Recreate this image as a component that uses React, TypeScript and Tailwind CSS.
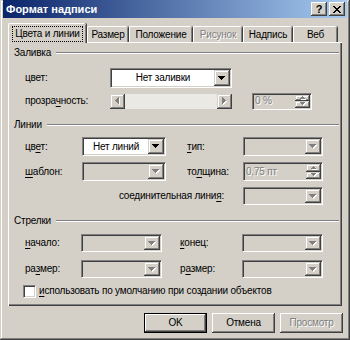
import React from "react";

const raised =
  "bg-[#d4d0c8] shadow-[inset_-1px_-1px_#404040,inset_1px_1px_#fff,inset_-2px_-2px_#808080,inset_2px_2px_#d4d0c8]";
const raisedCombo =
  "bg-[#d4d0c8] shadow-[inset_-1px_-1px_#404040,inset_1px_1px_#d4d0c8,inset_-2px_-2px_#808080,inset_2px_2px_#fff]";
const dis = "text-[#808080] [text-shadow:1px_1px_0_#fff]";

function DownArrow({ disabled }: { disabled?: boolean }) {
  return (
    <svg width="8" height="5" viewBox="0 0 8 5" shapeRendering="crispEdges">
      {disabled && <path d="M1 1h7v1h-1v1h-1v1h-1v1h-1v-1h-1v-1h-1v-1h-1z" fill="#fff" />}
      <path d="M0 0h7v1h-1v1h-1v1h-1v1h-1v-1h-1v-1h-1v-1h-1z" fill={disabled ? "#808080" : "#000"} />
    </svg>
  );
}

function SmallArrow({ up, disabled }: { up?: boolean; disabled?: boolean }) {
  const c = disabled ? "#808080" : "#000";
  return (
    <svg width="6" height="4" viewBox="0 0 6 4" shapeRendering="crispEdges">
      {disabled && (
        <path d={up ? "M3 1h1v1h1v1h1v1h-5v-1h1v-1h1z" : "M1 1h5v1h-1v1h-1v1h-1v-1h-1v-1h-1z"} fill="#fff" />
      )}
      <path d={up ? "M2 0h1v1h1v1h1v1h-5v-1h1v-1h1z" : "M0 0h5v1h-1v1h-1v1h-1v-1h-1v-1h-1z"} fill={c} />
    </svg>
  );
}

function SideArrow({ left }: { left?: boolean }) {
  return (
    <svg width="5" height="8" viewBox="0 0 5 8" shapeRendering="crispEdges">
      <path d={left ? "M4 1h1v7h-1v-1h-1v-1h-1v-1h-1v-1h1v-1h1v-1h1z" : "M1 1h1v1h1v1h1v1h1v1h-1v1h-1v1h-1v1h-1z"} fill="#fff" />
      <path d={left ? "M3 0h1v7h-1v-1h-1v-1h-1v-1h-1v-1h1v-1h1v-1h1z" : "M0 0h1v1h1v1h1v1h1v1h-1v1h-1v1h-1v1h-1z"} fill="#808080" />
    </svg>
  );
}

function Sunken({
  className,
  disabled,
  children,
}: {
  className: string;
  disabled?: boolean;
  children?: React.ReactNode;
}) {
  return (
    <div
      className={`box-border flex items-stretch border border-t-[#808080] border-l-[#808080] border-r-white border-b-white p-[1px] shadow-[inset_1px_1px_#404040,inset_-1px_-1px_#d4d0c8] ${
        disabled ? "bg-[#d4d0c8]" : "bg-white"
      } ${className}`}
    >
      {children}
    </div>
  );
}

function Combo({ className, text, disabled, center }: { className: string; text?: string; disabled?: boolean; center?: boolean }) {
  return (
    <Sunken className={className} disabled={disabled}>
      <div className={`flex flex-1 items-center whitespace-nowrap ${center ? "justify-center" : "pl-[3px]"} text-black`}>{text}</div>
      <div className={`flex w-[16px] items-center justify-center ${raisedCombo}`}>
        <DownArrow disabled={disabled} />
      </div>
    </Sunken>
  );
}

function Spin({ className, text }: { className: string; text: string }) {
  return (
    <Sunken className={className} disabled>
      <div className={`flex flex-1 items-center whitespace-nowrap pl-[1px] ${dis}`}>{text}</div>
      <div className="flex w-[15px] flex-col">
        <div className={`flex flex-1 items-center justify-center ${raisedCombo}`}>
          <SmallArrow up disabled />
        </div>
        <div className={`flex flex-1 items-center justify-center ${raisedCombo}`}>
          <SmallArrow disabled />
        </div>
      </div>
    </Sunken>
  );
}

function Group({ label }: { label: string }) {
  return (
    <div className="mr-[3px] flex h-[14px] items-center pl-[5px]">
      <span>{label}</span>
      <div className="ml-[5px] h-[2px] flex-1 border-t border-b border-t-[#808080] border-b-white" />
    </div>
  );
}

function U({ children }: { children: React.ReactNode }) {
  return <span className="underline underline-offset-[2px]">{children}</span>;
}

const tab =
  "ml-[1px] flex h-[16px] items-center justify-center whitespace-nowrap rounded-t-[2px] border-l border-t border-l-white border-t-white shadow-[inset_-1px_0_#808080,1px_0_#404040]";

export default function App() {
  return (
    <div className="relative h-[340px] w-[350px] overflow-hidden bg-[#d4d0c8] font-['Liberation_Sans',Arial,sans-serif] text-[10px] leading-none tracking-[-0.2px] text-black">
      <div className="box-border flex h-[340px] w-[350px] flex-col px-[3px] shadow-[inset_-1px_-1px_#404040,inset_1px_1px_#d4d0c8,inset_-2px_-2px_#808080,inset_2px_2px_#fff]">
        {/* title bar */}
        <div className="flex h-[18px] items-center bg-[linear-gradient(to_right,#0a246a,#a6caf0)] pl-[3px] pr-[2px]">
          <span className="flex-1 text-[11px] font-bold tracking-normal text-white">Формат надписи</span>
          <div className={`flex h-[14px] w-[16px] items-center justify-center text-[11px] font-bold ${raised}`}>?</div>
          <div className={`ml-[2px] flex h-[14px] w-[16px] items-center justify-center ${raised}`}>
            <svg width="8" height="7" viewBox="0 0 8 7" shapeRendering="crispEdges">
              <path d="M0 0h2v1h1v1h2v-1h1v-1h2v1h-1v1h-1v1h-1v1h1v1h1v1h1v1h-2v-1h-1v-1h-2v1h-1v1h-2v-1h1v-1h1v-1h1v-1h-1v-1h-1v-1h-1z" fill="#000" />
            </svg>
          </div>
        </div>

        {/* tabs */}
        <div className="relative z-10 ml-[5px] mt-[6px] flex h-[18px] items-end">
          <div className="relative -mb-[1px] flex h-[20px] w-[78px] items-center justify-center whitespace-nowrap rounded-t-[2px] border-l border-t border-l-white border-t-white bg-[#d4d0c8] shadow-[inset_-1px_0_#808080,1px_0_#404040]">
            <span className="border border-dotted border-black px-[2px] py-[2px]">Цвета и линии</span>
          </div>
          <div className={`${tab} w-[41px]`}>Размер</div>
          <div className={`${tab} w-[63px]`}>Положение</div>
          <div className={`${tab} w-[49px] ${dis}`}>Рисунок</div>
          <div className={`${tab} w-[49px]`}>Надпись</div>
          <div className={`${tab} w-[44px]`}>Веб</div>
        </div>

        {/* panel */}
        <div className="ml-[5px] box-border flex h-[264px] w-[334px] flex-col border-l border-t border-l-white border-t-white shadow-[inset_-1px_-1px_#404040,inset_-2px_-2px_#808080]">
          <div className="mt-[3px]">
            <Group label="Заливка" />
          </div>
          <div className="mt-[8px] flex h-[20px] items-center pl-[16px]">
            <span className="w-[85px]">цвет:</span>
            <Combo className="h-[20px] w-[122px]" text="Нет заливки" center />
          </div>
          <div className="mt-[5px] flex h-[16px] items-center pl-[16px]">
            <span className="w-[85px]">
              прозра<U>ч</U>ность:
            </span>
            <div className="flex h-[15px] w-[122px]">
              <div className={`flex w-[15px] items-center justify-center ${raisedCombo}`}>
                <SideArrow left />
              </div>
              <div className="flex-1 bg-[#ebe9e4]" />
              <div className={`flex w-[15px] items-center justify-center ${raisedCombo}`}>
                <SideArrow />
              </div>
            </div>
            <Spin className="ml-[20px] h-[17px] w-[60px]" text="0 %" />
          </div>

          <div className="mt-[9px]">
            <Group label="Линии" />
          </div>
          <div className="mt-[5px] flex h-[19px] items-center pl-[16px]">
            <span className="w-[57px]">
              цв<U>е</U>т:
            </span>
            <Combo className="h-[19px] w-[84px]" text="Нет линий" center />
            <span className="ml-[21px] w-[56px]">
              <U>т</U>ип:
            </span>
            <Combo className="h-[19px] w-[80px]" disabled />
          </div>
          <div className="mt-[6px] flex h-[19px] items-center pl-[16px]">
            <span className="w-[57px]">
              <U>ш</U>аблон:
            </span>
            <Combo className="h-[19px] w-[84px]" disabled />
            <span className="ml-[21px] w-[56px]">
              то<U>л</U>щина:
            </span>
            <Spin className="h-[19px] w-[80px]" text="0,75 пт" />
          </div>
          <div className="mt-[6px] flex h-[18px] items-center">
            <span className="w-[218px] pr-[3px] text-right">
              соединительная лини<U>я</U>:
            </span>
            <Combo className="ml-[16px] h-[18px] w-[80px]" disabled />
          </div>

          <div className="mt-[9px]">
            <Group label="Стрелки" />
          </div>
          <div className="mt-[6px] flex h-[18px] items-center pl-[16px]">
            <span className="w-[56px]">
              <U>н</U>ачало:
            </span>
            <Combo className="h-[18px] w-[81px]" disabled />
            <span className="ml-[18px] w-[62px]">
              <U>к</U>онец:
            </span>
            <Combo className="h-[18px] w-[81px]" disabled />
          </div>
          <div className="mt-[8px] flex h-[18px] items-center pl-[16px]">
            <span className="w-[56px]">
              ра<U>з</U>мер:
            </span>
            <Combo className="h-[18px] w-[81px]" disabled />
            <span className="ml-[18px] w-[62px]">
              р<U>а</U>змер:
            </span>
            <Combo className="h-[18px] w-[81px]" disabled />
          </div>
          <div className="mt-[6px] flex h-[14px] items-center pl-[14px]">
            <Sunken className="h-[13px] w-[13px]" />
            <span className="ml-[3px] whitespace-nowrap">
              <U>и</U>спользовать по умолчанию при создании объектов
            </span>
          </div>
        </div>

        {/* buttons */}
        <div className="mt-[7px] flex h-[20px] pl-[141px]">
          <div className="box-border flex h-[20px] w-[63px] items-center justify-center border border-black">
            <div className={`flex h-full w-full items-center justify-center ${raised}`}>OK</div>
          </div>
          <div className={`ml-[5px] flex h-[20px] w-[63px] items-center justify-center ${raised}`}>Отмена</div>
          <div className={`ml-[5px] flex h-[20px] w-[63px] items-center justify-center ${raised} ${dis}`}>Просмотр</div>
        </div>
      </div>
    </div>
  );
}
